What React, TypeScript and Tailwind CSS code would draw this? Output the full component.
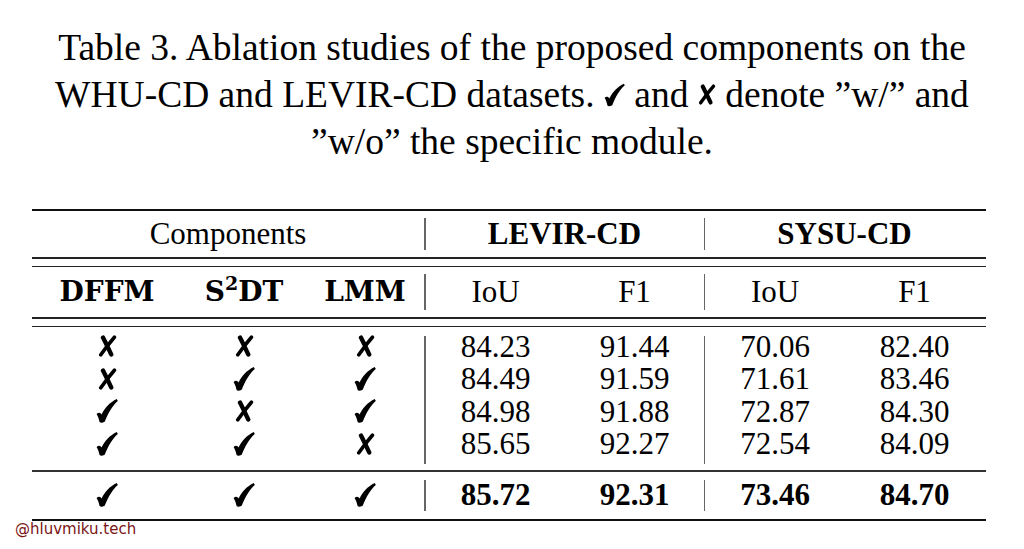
import React from "react";

const serif = { fontFamily: '"Liberation Serif", "Times New Roman", serif' };
const cm = { fontFamily: '"DejaVu Serif", "Liberation Serif", serif' };

function Check({ className = "w-[22px] h-[24px]" }: { className?: string }) {
  return (
    <svg viewBox="0 0 22 24" className={className}>
      <path
        d="M0.6,15 C2.6,12.9 4.6,13.6 5.6,15.6 C8.8,9 13.8,3.4 20.8,0.1 L21.8,1.9 C16.4,6.6 12.4,13.4 8.8,22.6 C7.6,24 4.4,24.1 3.6,22.9 C2.9,19.8 1.9,17 0.6,15 Z"
        fill="#000"
      />
    </svg>
  );
}

function Cross({ className = "w-[19px] h-[22px]" }: { className?: string }) {
  return (
    <svg viewBox="0 0 19 22" className={className}>
      <path d="M5,2.6 Q8.6,9.6 13.2,19.4" stroke="#000" strokeWidth="4.4" strokeLinecap="round" fill="none" />
      <path d="M16.4,2.2 Q9.6,10 2.8,19.8" stroke="#000" strokeWidth="3.6" strokeLinecap="round" fill="none" />
    </svg>
  );
}

const rows: (boolean | string)[][] = [
  [false, false, false, "84.23", "91.44", "70.06", "82.40"],
  [false, true, true, "84.49", "91.59", "71.61", "83.46"],
  [true, false, true, "84.98", "91.88", "72.87", "84.30"],
  [true, true, false, "85.65", "92.27", "72.54", "84.09"],
];

const widths = ["w-[150px]", "w-[124px]", "w-[118px]", "w-[140px]", "w-[138px]", "w-[140px]", "w-[139px]"];

function Mark({ v }: { v: boolean }) {
  return v ? <Check /> : <Cross />;
}

function Sep({ h }: { h: string }) {
  return <div className={`w-[1.5px] bg-[#666] self-center ${h}`} />;
}

export default function App() {
  return (
    <div className="relative w-[1024px] h-[549px] bg-white overflow-hidden text-black">
      <div style={serif} className="pt-[24px] text-center text-[37.5px] leading-[47px]">
        <div>Table 3. Ablation studies of the proposed components on the</div>
        <div className="flex justify-center items-baseline">
          <span>WHU-CD and LEVIR-CD datasets.&nbsp;</span>
          <span className="inline-flex self-center"><Check className="w-[21px] h-[24px]" /></span>
          <span>&nbsp;and&nbsp;</span>
          <span className="inline-flex self-center"><Cross className="w-[18px] h-[23px]" /></span>
          <span>&nbsp;denote ”w/” and</span>
        </div>
        <div>”w/o” the specific module.</div>
      </div>

      <div style={serif} className="ml-[32px] mt-[44px] w-[954px] text-[31px]">
        <div className="h-[2px] bg-[#111]" />
        {/* header 1 */}
        <div className="flex h-[46px] items-center">
          <div className="w-[392px] text-center">Components</div>
          <Sep h="h-[32px]" />
          <div className="w-[278px] text-center font-bold">LEVIR-CD</div>
          <Sep h="h-[32px]" />
          <div className="w-[279px] text-center font-bold">SYSU-CD</div>
        </div>
        <div className="h-[1.5px] bg-[#222]" />
        <div className="h-[7px]" />
        <div className="h-[1.5px] bg-[#222]" />
        {/* header 2 */}
        <div className="flex h-[50px] items-center">
          <div style={cm} className="w-[150px] text-center font-bold text-[28px]">DFFM</div>
          <div style={cm} className="w-[124px] text-center font-bold text-[28px]">
            S<sup className="text-[19px] font-bold relative -top-[11px] align-baseline">2</sup>DT
          </div>
          <div style={cm} className="w-[118px] text-center font-bold text-[28px]">LMM</div>
          <Sep h="h-[36px]" />
          <div className="w-[140px] text-center">IoU</div>
          <div className="w-[138px] text-center">F1</div>
          <Sep h="h-[36px]" />
          <div className="w-[140px] text-center">IoU</div>
          <div className="w-[139px] text-center">F1</div>
        </div>
        <div className="h-[1.5px] bg-[#222]" />
        <div className="h-[7px]" />
        <div className="h-[1.5px] bg-[#222]" />
        {/* data */}
        <div className="flex pt-[3px] pb-[10px]">
          {[0, 1, 2, 3, 4, 5, 6].map((c) => (
            <React.Fragment key={c}>
              {(c === 3 || c === 5) && <div className="w-[1.5px] bg-[#666] mt-[6px] mb-[-4px]" />}
              <div className={`${widths[c]} flex flex-col`}>
                {rows.map((r, i) => (
                  <div key={i} className="h-[32.5px] flex items-center justify-center leading-none">
                    {c < 3 ? <Mark v={r[c] as boolean} /> : (r[c] as string)}
                  </div>
                ))}
              </div>
            </React.Fragment>
          ))}
        </div>
        <div className="h-[1.5px] bg-[#333]" />
        {/* final row */}
        <div className="flex h-[47px] items-center font-bold">
          <div className="w-[150px] flex justify-center"><Check /></div>
          <div className="w-[124px] flex justify-center"><Check /></div>
          <div className="w-[118px] flex justify-center"><Check /></div>
          <Sep h="h-[31px]" />
          <div className="w-[140px] text-center">85.72</div>
          <div className="w-[138px] text-center">92.31</div>
          <Sep h="h-[31px]" />
          <div className="w-[140px] text-center">73.46</div>
          <div className="w-[139px] text-center">84.70</div>
        </div>
        <div className="h-[2px] bg-[#111]" />
      </div>

      <div
        style={{ fontFamily: '"DejaVu Sans", sans-serif' }}
        className="absolute left-[15px] top-[519px] text-[15px] leading-[20px] text-[#7a1414]"
      >
        @hluvmiku.tech
      </div>
    </div>
  );
}
